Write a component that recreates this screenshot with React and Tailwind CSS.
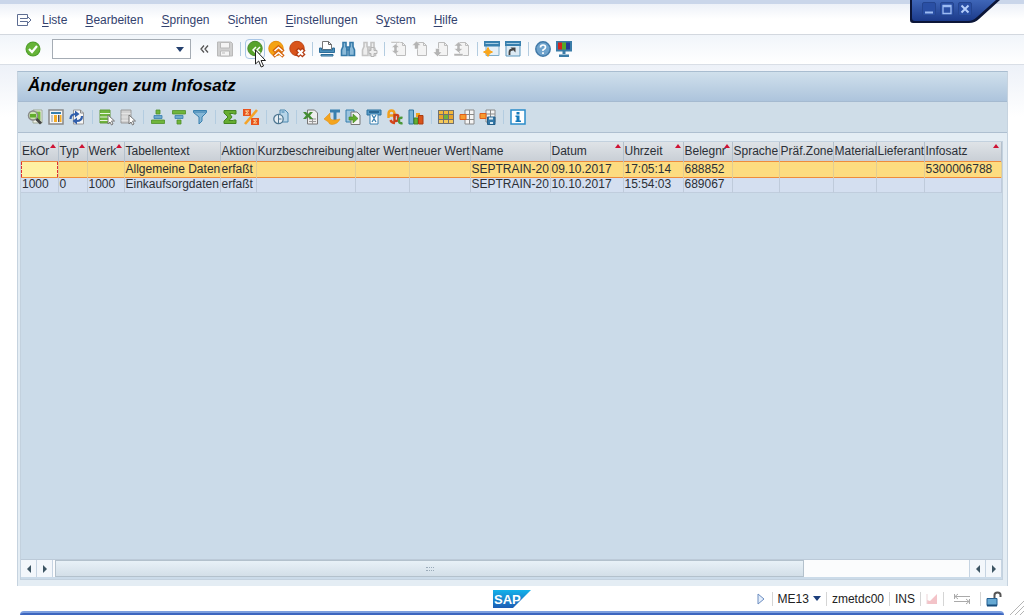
import { useState } from "react";

const menus = [
  ["", "L", "iste"],
  ["", "B", "earbeiten"],
  ["", "S", "pringen"],
  ["S", "i", "chten"],
  ["", "E", "instellungen"],
  ["S", "y", "stem"],
  ["", "H", "ilfe"],
];

const columns = [
  { key: "ekor", label: "EkOr", width: "w-[37px]", sorted: true },
  { key: "typ", label: "Typ", width: "w-[29px]", sorted: true },
  { key: "werk", label: "Werk", width: "w-[37px]", sorted: true },
  { key: "text", label: "Tabellentext", width: "w-24" },
  { key: "aktion", label: "Aktion", width: "w-9" },
  { key: "kurz", label: "Kurzbeschreibung", width: "w-[99px]" },
  { key: "alt", label: "alter Wert", width: "w-[54px]" },
  { key: "neu", label: "neuer Wert", width: "w-[61px]" },
  { key: "name", label: "Name", width: "w-20" },
  { key: "datum", label: "Datum", width: "w-[73px]", sorted: true },
  { key: "zeit", label: "Uhrzeit", width: "w-[60px]", sorted: true },
  { key: "beleg", label: "Belegnr", width: "w-[49px]", sorted: true },
  { key: "sprache", label: "Sprache", width: "w-[47px]" },
  { key: "zone", label: "Präf.Zone", width: "w-[54px]" },
  { key: "material", label: "Material", width: "w-[43px]" },
  { key: "lieferant", label: "Lieferant", width: "w-12" },
  { key: "infosatz", label: "Infosatz", width: "w-auto", sorted: true },
];

const rows = [
  { text: "Allgemeine Daten", aktion: "erfaßt", name: "SEPTRAIN-20", datum: "09.10.2017", zeit: "17:05:14", beleg: "688852", infosatz: "5300006788" },
  { ekor: "1000", typ: "0", werk: "1000", text: "Einkaufsorgdaten", aktion: "erfaßt", name: "SEPTRAIN-20", datum: "10.10.2017", zeit: "15:54:03", beleg: "689067" },
];

// Shared shapes
const page = "M5.5 1.5h6l3 3v10h-9z";
const pointer = "M9 6v9l2-2 1.500 3 1.500-1-1.500-3h3z";

function Binoculars({ color, light }) {
  return (
    <g fill={light} stroke={color} strokeWidth="1.6">
      <path d="M3 1.500h3v4l1 2v7H1.500V9L3 5.500z" />
      <path d="M10 1.500h3v4L14.500 9v5.500H9v-7l1-2z" />
      <path d="M7 6h2v3H7z" />
    </g>
  );
}

function PageArrow({ d }) {
  return (
    <>
      <path d={page} fill="#f3f3f3" stroke="#bdbdbd" />
      <path d="M11.500 1.500v3h3" fill="none" stroke="#bdbdbd" />
      <path d={d} fill="#b4b4b4" stroke="#fff" strokeWidth=".5" />
    </>
  );
}

const icons = {
  check: (
    <>
      <circle cx="8" cy="8" r="7.500" fill="#4f9e2c" />
      <circle cx="8" cy="8" r="6.500" fill="#66b338" />
      <path d="M4 8l3 3 5-6" fill="none" stroke="#fff" strokeWidth="2.200" />
    </>
  ),
  save: (
    <g stroke="#b9b9b9">
      <path d="M.5 1h13.500l1.500 1.500V15H.5z" fill="#cfcfcf" />
      <path d="M3.500 1.500h9v5.500h-9zM3.500 10h9v5h-9z" fill="#f4f4f4" />
      <path d="M5 12h3" />
    </g>
  ),
  back: (
    <>
      <circle cx="8" cy="7.500" r="7.200" fill="#58a32b" stroke="#46892a" />
      <path d="M9 6L6 9l3 3M13 6l-3 3 3 3" fill="none" stroke="#fff" strokeWidth="1.500" />
    </>
  ),
  exit: (
    <>
      <circle cx="8" cy="7.500" r="7.200" fill="#f5a313" stroke="#e58d0a" />
      <path d="M5.500 10.500l5-4.500 5 4.500M5.500 15.500l5-4.500 5 4.500" fill="none" stroke="#d4620c" strokeWidth="3.400" />
      <path d="M6.500 10l4-3.500 4 3.500M6.500 15l4-3.500 4 3.500" fill="none" stroke="#fff" strokeWidth="1.600" />
    </>
  ),
  cancel: (
    <>
      <circle cx="8" cy="7.500" r="7.200" fill="#d9541b" stroke="#bd4514" />
      <path d="M8 8l7 7M15 8l-7 7" stroke="#b43a10" strokeWidth="4.500" />
      <path d="M9 9l5 5M14 9l-5 5" stroke="#fff" strokeWidth="2.200" />
    </>
  ),
  print: (
    <>
      <path d="M3.500 .5h6l3 3v5h-9z" fill="#fff" stroke="#777" />
      <path d="M9.500 .5v3h3" fill="none" stroke="#666" />
      <path d="M.5 7h2v2h11V7h2v4.500H.5z" fill="#4b8fba" stroke="#2c6d99" />
      <path d="M2 13.500h12V15H2z" fill="#79afd0" stroke="#2c6d99" />
    </>
  ),
  find: <Binoculars color="#3479a8" light="#8dbbd9" />,
  findNext: (
    <>
      <Binoculars color="#c4c4c4" light="#ededed" />
      <path d="M10 6.500h3v3h3v3h-3v3h-3v-3H8v-3h2z" fill="#eee" stroke="#b5b5b5" />
    </>
  ),
  pageFirst: <PageArrow d="M0 .5h9V2H0zM4.500 3L8.500 6.500H6v3h2.500L4.500 13 .5 9.500H3v-3H.5z" />,
  pageUp: <PageArrow d="M4.500 0L9 4.500H6.500V8h-4V4.500H0z" />,
  pageDown: <PageArrow d="M2.500 7.500h4V11H9l-4.500 4.500L0 11h2.500z" />,
  pageLast: <PageArrow d="M4.500 1L9 5H6v2.500h3l-4.500 4L0 7.500h3V5H0zM0 12.500h9V15H0z" />,
  session: (
    <>
      <path d="M2 1h13v13.500H2z" fill="#e4eff7" stroke="#7fadca" />
      <path d="M0 0h16v5.500H0z" fill="#377fae" />
      <path d="M1.500 2.500h13" stroke="#a5cce3" />
      <path d="M4 6.500l1.500 3 3 1.500-3 1.500-1.500 3-1.500-3L-.5 11l3-1.500z" fill="#faa61a" stroke="#faa61a" />
    </>
  ),
  shortcut: (
    <>
      <path d="M1 1h14v14H1z" fill="#dceaf4" stroke="#5c97bd" />
      <path d="M0 0h16v5H0z" fill="#377fae" />
      <path d="M1.500 2.500h13" stroke="#a5cce3" />
      <path d="M4.500 14V11q0-2.500 3.500-2.500" fill="none" stroke="#444" strokeWidth="1.800" />
      <path d="M5.500 6.500h5v5z" fill="#444" />
    </>
  ),
  help: (
    <>
      <circle cx="8" cy="8" r="7.200" fill="#6fa3cc" stroke="#4179a8" strokeWidth="1.500" />
      <path d="M5.500 6.500Q5.500 4 8 4t2.500 2.300Q10.500 8 8 9v1M8 11.300v1.700" fill="none" stroke="#fff" strokeWidth="1.700" />
    </>
  ),
  layout: (
    <>
      <path d="M0 0h16v10.500H0z" fill="#3a7ca8" />
      <path d="M2 1.500h4v7H2z" fill="#d3241d" />
      <path d="M6 1.500h4v7H6z" fill="#58a829" />
      <path d="M10 1.500h4v7h-4z" fill="#243b96" />
      <path d="M6.500 10h3v3h-3zM3 13.500h10V16H3z" fill="#3a7ca8" />
    </>
  ),
  detail: (
    <>
      <path d="M6 1h9v13H6z" fill="#eef1ea" stroke="#a0ab97" />
      <path d="M9 2.500h4.500v9H9z" fill="#73b83a" />
      <circle cx="6" cy="6.500" r="4.500" fill="#c9e5ae" stroke="#8a8a8a" strokeWidth="1.500" />
      <path d="M3 5h6v3.500H3z" fill="#62ad2c" />
      <path d="M9.500 10l4.500 4.500" stroke="#444" strokeWidth="2.800" />
    </>
  ),
  table: (
    <>
      <path d="M1 1h14v14H1z" fill="#f6f6f6" stroke="#888" strokeWidth="1.500" />
      <path d="M3 3h10v2H3z" fill="#377fae" />
      <path d="M3 6h2v7H3z" fill="#c5c5c5" />
      <path d="M6 6h3v7H6z" fill="#f7ad25" />
      <path d="M10 6h1.500v7H10z" fill="#555" />
      <path d="M12 6h1.500v7H12z" fill="#f7ad25" />
    </>
  ),
  refresh: (
    <>
      <path d="M4.500 1h7l3 3v11h-10z" fill="#f7f7f7" stroke="#999" />
      <path d="M11.500 1v3h3" fill="none" stroke="#888" />
      <path d="M1.500 10q0-5 5.500-5M13 7q0 5-5.500 5" fill="none" stroke="#315fac" strokeWidth="2.200" />
      <path d="M6 1.500L10.500 5 6 8.500zM8 8.500v7L3.500 12z" fill="#315fac" />
    </>
  ),
  selectAll: (
    <>
      <path d="M1 1h10v13H1z" fill="#70b53b" stroke="#639a3b" />
      <path d="M1 4.500h10M1 8h10M1 11.500h10" stroke="#e8f4df" strokeWidth="1.200" />
      <path d={pointer} fill="#fff" stroke="#777" />
    </>
  ),
  deselect: (
    <>
      <path d="M1 1h10v13H1z" fill="#d2d2d2" stroke="#999" />
      <path d="M1.500 4.500h9M1.500 8h9M1.500 11.500h9" stroke="#e4e4e4" />
      <path d={pointer} fill="#fff" stroke="#777" />
    </>
  ),
  sortAsc: (
    <g strokeWidth=".8">
      <path d="M6 1h4v4H6z" fill="#70b53b" stroke="#4e8f28" />
      <path d="M4 6.500h8v3H4z" fill="#6fa9cd" stroke="#377fae" />
      <path d="M1.500 11h13v3.500h-13z" fill="#70b53b" stroke="#4e8f28" />
    </g>
  ),
  sortDesc: (
    <g strokeWidth=".8">
      <path d="M1.500 1.500h13V5h-13z" fill="#70b53b" stroke="#4e8f28" />
      <path d="M4 6.500h8v3H4z" fill="#6fa9cd" stroke="#377fae" />
      <path d="M6 11h4v4H6z" fill="#70b53b" stroke="#4e8f28" />
    </g>
  ),
  filter: (
    <>
      <path d="M1.500 1.500h13v2L10 8v4l-3 3V8L1.500 3.500z" fill="#86b7d6" stroke="#377fae" />
      <path d="M2 3h12" stroke="#377fae" />
    </>
  ),
  sum: <path d="M2 1.500h12V5h-2.500l-.5-.5H7.500L10 8l-3 3.500h4l.5-.5H14v3.500H2V12l4-4-4-4z" fill="#66ad31" stroke="#438522" />,
  subtotal: (
    <>
      <path d="M0 0h8v7H0zM8 9h8v7H8z" fill="#e8531d" />
      <path d="M6 2H2.500l2 1.500-2 1.500H6M14 11h-3.500l2 1.500-2 1.500H14" fill="none" stroke="#fde3a8" />
      <path d="M14 1L2 15" stroke="#f5a428" strokeWidth="2.600" />
    </>
  ),
  preview: (
    <>
      <path d="M7 1h5l3 3v9H7z" fill="#b8d5e8" stroke="#4d88af" />
      <circle cx="5.500" cy="10" r="4.700" fill="#e5edf3" stroke="#4d7691" strokeWidth="1.300" />
      <path d="M5.500 6v8M5.500 10h3" stroke="#4d7691" />
      <path d="M8.500 3h3" stroke="#377fae" />
    </>
  ),
  excel: (
    <>
      <path d="M4.500 1h7l3 3v11h-10z" fill="#eee" stroke="#777" />
      <path d="M6 10h7M6 12.500h7M9.500 9v6" stroke="#999" />
      <path d="M0 3h3l2 2 2-2h3L7 6.500 10 10H7L5 8l-2 2H0l3-3.500z" fill="#448c32" />
    </>
  ),
  word: (
    <>
      <path d="M6 .5h10v3h-3.500V11h-3V3.500H6z" fill="#377fae" />
      <path d="M0 10l6-6v4q0 3 3 3 4 0 7-1-2 5-8 5.500-3 0-3.500-2.500z" fill="#f4a51f" stroke="#e0901a" strokeWidth=".6" />
    </>
  ),
  exportFile: (
    <>
      <path d="M1 1h8v12H1z" fill="#9dc5df" stroke="#377fae" />
      <path d="M6 3h6l3 3v9.500H6z" fill="#f4f4f4" stroke="#777" />
      <path d="M4 8h4V5l5 4.500L8 14v-3H4z" fill="#60aa2c" stroke="#438522" strokeWidth=".6" />
    </>
  ),
  mail: (
    <>
      <path d="M1 1h14v5H1z" fill="#5a9bc5" stroke="#2b719f" />
      <path d="M3 3h10" stroke="#1b5680" strokeWidth="1.500" />
      <path d="M4 5h8v10H4z" fill="#fff" stroke="#377fae" />
      <path d="M6 6l2 3 2-3M6 13l2-3 2 3" fill="none" stroke="#377fae" strokeWidth="1.300" />
    </>
  ),
  abc: (
    <g fill="none" strokeWidth="2.400">
      <path d="M1.500 9V5q0-3.500 3-3.500T7.500 5v4M1.500 6.500h6" stroke="#f1a01c" />
      <path d="M3.500 11q1 3 4.500 3" stroke="#d5451a" />
      <path d="M7.500 6h2q2.500 0 1.500 2.500 1 3.500-2 3.500H7.500z" stroke="#c8401a" />
      <path d="M15.500 9q-3.500-1-3.500 2.500t3.500 2.500" stroke="#4b9739" />
    </g>
  ),
  chart: (
    <>
      <path d="M1 1h4.500v14H1z" fill="#79b3d5" stroke="#2f759f" />
      <path d="M6 9h4v6H6z" fill="#65ad32" stroke="#438522" />
      <path d="M8 4h4v4H8z" fill="#f4a51f" />
      <path d="M10.500 6.500H15V15h-4.500z" fill="#d9541b" stroke="#ab3d10" />
    </>
  ),
  grid: (
    <>
      <path d="M0 1h16v14H0z" fill="#707070" />
      <path d="M1 2h4v3H1zM6 2h4v3H6zM11 2h4v3h-4z" fill="#f3b83c" />
      <path d="M1 6h4v4H1zM11 6h4v4h-4z" fill="#e9a32b" />
      <path d="M6 6h4v4H6z" fill="#6fb33a" />
      <path d="M1 11h4v3H1zM6 11h4v3H6zM11 11h4v3h-4z" fill="#f5c95c" />
    </>
  ),
  variant: (
    <>
      <path d="M6 1h9v14H6z" fill="#f5f5f5" stroke="#8a8a8a" />
      <path d="M10.500 1v14M6 5.500h9M6 10.500h9" stroke="#8a8a8a" />
      <path d="M1 5.500h6v5H1z" fill="#f79b2e" stroke="#e15e1a" />
    </>
  ),
  variantSave: (
    <>
      <path d="M6 1h9v12H6z" fill="#f5f5f5" stroke="#8a8a8a" />
      <path d="M10.500 1v12M6 5h9" stroke="#8a8a8a" />
      <path d="M0 4.500h6v5H0z" fill="#f79b2e" stroke="#e15e1a" />
      <path d="M7.500 8H15v7.500H7.500z" fill="#3479a8" stroke="#235f8a" />
      <path d="M9 8.500h4v2H9zM10 13h3v2h-3z" fill="#d7e8f3" />
    </>
  ),
  info: (
    <>
      <path d="M1 1h14v14H1z" fill="#fff" stroke="#2b8cc9" strokeWidth="1.500" />
      <path d="M6.500 3h3v2.500h-3zM5.500 6.500h4v5H11V13H5.500v-1.500h1v-3.500h-1z" fill="#167abb" />
    </>
  ),
};

const mainTools = [
  ["save", "Sichern"], null,
  ["back", "Zurück"], ["exit", "Beenden"], ["cancel", "Abbrechen"], null,
  ["print", "Drucken"], ["find", "Suchen"], ["findNext", "Weiter suchen"], null,
  ["pageFirst", "Erste Seite"], ["pageUp", "Vorige Seite"], ["pageDown", "Nächste Seite"], ["pageLast", "Letzte Seite"], null,
  ["session", "Neuer Modus"], ["shortcut", "Verknüpfung erzeugen"], null,
  ["help", "Hilfe"], ["layout", "Lokales Layout"],
];

const listTools = [
  ["detail", "Details"], ["table", "Tabelle"], ["refresh", "Auffrischen"], null,
  ["selectAll", "Alle markieren"], ["deselect", "Alle entmarkieren"], null,
  ["sortAsc", "Aufsteigend sortieren"], ["sortDesc", "Absteigend sortieren"], ["filter", "Filter"], null,
  ["sum", "Summe"], ["subtotal", "Zwischensumme"], null,
  ["preview", "Druckvorschau"], null,
  ["excel", "Excel"], ["word", "Textverarbeitung"], ["exportFile", "Lokale Datei"], ["mail", "Mail"], ["abc", "ABC-Analyse"], ["chart", "Grafik"], null,
  ["grid", "Layout ändern"], ["variant", "Layout auswählen"], ["variantSave", "Layout sichern"], null,
  ["info", "Information"],
];

function Icon({ name }) {
  return (
    <svg viewBox="0 0 16 16" className="size-4 overflow-visible">
      {icons[name]}
    </svg>
  );
}

function Toolbar({ tools }) {
  return tools.map((tool, i) =>
    tool ? (
      <button
        key={tool[0]}
        aria-label={tool[1]}
        className={`relative size-4 shrink-0 ${tool[0] === "back" ? "outline outline-[#a9c6e6] rounded-xs outline-offset-1" : ""}`}
      >
        <Icon name={tool[0]} />
        {tool[0] === "back" && <Cursor />}
      </button>
    ) : (
      <span key={i} className="flex w-1 shrink-0 justify-center">
        <span className="h-3.5 w-px bg-[#b3cce0]" />
      </span>
    )
  );
}

function Cursor() {
  return (
    <svg viewBox="0 0 12 19" className="absolute top-2 left-2 z-10 h-[19px] w-3">
      <path d="M.5 1v14l3.200-3 2.500 6 2.300-1-2.500-5.500h4.500z" fill="#fff" stroke="#222" />
    </svg>
  );
}

function WindowControls() {
  return (
    <div className="absolute top-0 right-5 h-6 w-[94px]">
      <svg viewBox="0 0 94 24" className="absolute inset-0 h-6 w-[94px]">
        <defs>
          <linearGradient id="tab" x1="0" y1="0" x2="0" y2="1">
            <stop offset="0" stopColor="#3f66b8" />
            <stop offset="1" stopColor="#1b3a8a" />
          </linearGradient>
        </defs>
        <path d="M0 0v20q0 3 3 3h56q6 0 10-4L90 0z" fill="#0c1638" />
        <path d="M2 0v18q0 3 3 3h53q5 0 9-4L86 0z" fill="url(#tab)" />
      </svg>
      <div className="relative flex gap-1 pt-0.5 pl-3">
        <button aria-label="Minimieren" className="size-3.5 rounded-xs border border-[#244590] bg-[#2a4fa4]">
          <svg viewBox="0 0 12 12"><path d="M2 9.500h8" stroke="#9dbcf3" strokeWidth="2" /></svg>
        </button>
        <button aria-label="Maximieren" className="size-3.5 rounded-xs border border-[#244590] bg-[#2a4fa4]">
          <svg viewBox="0 0 12 12"><path d="M2 2.500h8v8H2zM2 3.500h8" fill="none" stroke="#9dbcf3" strokeWidth="1.300" /></svg>
        </button>
        <button aria-label="Schließen" className="size-3.5 rounded-xs border border-[#244590] bg-[#2a4fa4]">
          <svg viewBox="0 0 12 12"><path d="M2.500 2.500l7 7M9.500 2.500l-7 7" stroke="#b4cdfa" strokeWidth="2" /></svg>
        </button>
      </div>
    </div>
  );
}

function ScrollButton({ label, left }) {
  return (
    <button aria-label={label} className="flex w-4 shrink-0 items-center justify-center border-r border-[#c6d4e2] bg-[#f3f7fb]">
      <svg viewBox="0 0 4 8" className="h-2 w-1">
        <path d={left ? "M4 0v8L0 4z" : "M0 0v8l4-4z"} fill="#3d5563" />
      </svg>
    </button>
  );
}

function Divider() {
  return <span className="h-3.5 w-px shrink-0 bg-[#d5d5d5]" />;
}

function ResultTable() {
  return (
    <table className="w-full table-fixed border-collapse text-left text-[12px] leading-[14px] text-[#2b2f36]">
      <thead>
        <tr className="h-[19px] bg-linear-to-b from-[#dfe3e7] to-[#c9cfd6]">
          {columns.map((col) => (
            <th key={col.key} className={`${col.width} relative border-r border-[#b4c0cc] pl-px font-normal whitespace-nowrap`}>
              {col.label}
              {col.sorted && (
                <svg viewBox="0 0 6 4" className="absolute top-0.5 right-0.5 h-1 w-1.5">
                  <path d="M3 0l3 4H0z" fill="#cf1233" />
                </svg>
              )}
            </th>
          ))}
        </tr>
      </thead>
      <tbody>
        {rows.map((row, i) => (
          <tr key={row.beleg} className={i === 0 ? "h-4 border-y border-[#ee8b3c] bg-[#fddc80]" : "h-[15px] border-b border-[#c0cddd] bg-[#d4dff0]"}>
            {columns.map((col) => (
              <td
                key={col.key}
                className={`relative border-r pl-px leading-[13px] whitespace-nowrap ${i === 0 ? "border-r-[#e3cd91]" : "border-r-[#bfcbdb]"}`}
              >
                {row[col.key]}
                {i === 0 && col.key === "ekor" && (
                  <span className="absolute inset-0 border-x border-dashed border-[#dd2f35] bg-[#fff1a3]" />
                )}
              </td>
            ))}
          </tr>
        ))}
      </tbody>
    </table>
  );
}

export default function App() {
  const [command, setCommand] = useState("");

  return (
    <div className="relative flex min-h-screen flex-col overflow-hidden bg-white font-['Liberation_Sans',Arial,sans-serif] text-[12px]">
      {/* Menu bar */}
      <nav className="flex h-[35px] items-center border-t-4 border-b border-t-[#cad6ea] border-b-[#d3d8df] bg-linear-to-b from-[#edf1f8] to-white to-50% pt-0.5 pl-4 text-[#33426e]">
        <button aria-label="Systemmenü" className="mr-2.5">
          <svg viewBox="0 0 16 12" className="h-3 w-4" fill="none" stroke="#5d6d92">
            <path d="M11.500 3V.5H1.500v11h10V9M4 4.500h7.500V2.500L15 6l-3.500 3.500v-2H4" />
          </svg>
        </button>
        <div className="flex gap-[18px]">
          {menus.map(([before, key, after]) => (
            <button key={key}>
              {before}
              <span className="underline underline-offset-2">{key}</span>
              {after}
            </button>
          ))}
        </div>
      </nav>

      {/* Standard toolbar */}
      <div className="flex h-[30px] items-center gap-[5px] border-b border-[#d9dee6] bg-linear-to-b from-[#f1f5fa] to-white pb-px pl-[25px]">
        <button aria-label="Weiter" className="size-4"><Icon name="check" /></button>
        <div className="ml-1.5 flex h-5 w-[139px] border border-[#a5acb4] bg-white">
          <input
            aria-label="Kommandofeld"
            value={command}
            onChange={(e) => setCommand(e.target.value)}
            className="min-w-0 flex-1 px-1 outline-none"
          />
          <button aria-label="Kommandos anzeigen" className="flex w-5 items-center justify-center">
            <svg viewBox="0 0 8 5" className="h-[5px] w-2"><path d="M0 0h8L4 5z" fill="#24406e" /></svg>
          </button>
        </div>
        <button aria-label="Kommandofeld ausblenden" className="flex size-4 items-center justify-center">
          <svg viewBox="0 0 9 8" className="h-2 w-[9px]" fill="none" stroke="#555" strokeWidth="1.300">
            <path d="M4 .5L1 4l3 3.500M8 .5L5 4l3 3.500" />
          </svg>
        </button>
        <Toolbar tools={mainTools} />
      </div>

      {/* Content */}
      <div className="flex flex-1 flex-col bg-linear-to-b from-[#edf1f8] to-white to-10% pt-1.5 pr-4 pl-[17px]">
        <main className="flex flex-1 flex-col border-x border-t border-[#a9bdd0] border-x-[#c6d3df] bg-[#cfdde8]">
          <h1 className="flex h-[30px] items-center border-b border-[#a5bad0] bg-linear-to-b from-[#d0e0ec] to-[#adc4dc] pb-0.5 pl-2.5 text-[17px] font-bold text-black italic">
            Änderungen zum Infosatz
          </h1>
          <div className="flex h-[31px] items-center gap-[5px] border-b border-[#aebfd0] pb-px pl-[9px]">
            <Toolbar tools={listTools} />
          </div>
          <div className="flex flex-1 flex-col bg-[#e4edf4] pt-2 pr-1 pb-1.5 pl-0.5">
            <div className="flex flex-1 flex-col border border-[#c3d1de] bg-[#cbdbe9]">
              <div className="flex-1">
                <ResultTable />
              </div>
              {/* Horizontal scrollbar */}
              <div className="mb-0.5 flex h-[18px] border-t border-[#bccad8] bg-[#fbfcfd]">
                <ScrollButton label="Nach links" left />
                <ScrollButton label="Nach rechts" />
                <div className="flex-1 border-r border-[#c6d4e2] pl-0.5">
                  <div className="flex h-full w-[82%] items-center justify-center border border-[#b3c1cc] bg-linear-to-b from-[#e8f1f7] to-[#d3dfe8]">
                    <span className="h-1 w-2 border-y border-dotted border-[#9aabb9]" />
                  </div>
                </div>
                <ScrollButton label="Nach links" left />
                <ScrollButton label="Nach rechts" />
              </div>
            </div>
          </div>
        </main>
      </div>

      {/* Status bar */}
      <footer className="grid h-[25px] grid-cols-[1fr_auto_1fr] items-center text-[#222]">
        <span />
        <svg viewBox="0 0 38 18" className="h-[18px] w-[38px]" role="img" aria-label="SAP">
          <defs>
            <linearGradient id="sap" x1="0" y1="0" x2="0" y2="1">
              <stop offset="0" stopColor="#13b1ea" />
              <stop offset="1" stopColor="#1c5db5" />
            </linearGradient>
          </defs>
          <path d="M0 0h38L20 18H0z" fill="url(#sap)" />
          <text x="1" y="14" fill="#fff" fontSize="13" fontWeight="bold" fontFamily="Liberation Sans, Arial, sans-serif">SAP</text>
        </svg>
        <div className="flex items-center justify-end gap-[5px] pr-[22px]">
          <button aria-label="Statusfeld einblenden" className="mr-0.5">
            <svg viewBox="0 0 8 12" className="h-3 w-2"><path d="M1 1l6 5-6 5z" fill="#e4eefb" stroke="#6c8dc0" /></svg>
          </button>
          <Divider />
          <button className="flex items-center gap-1">
            ME13
            <svg viewBox="0 0 8 5" className="h-[5px] w-2"><path d="M0 0h8L4 5z" fill="#1c3e7b" /></svg>
          </button>
          <Divider />
          <span>zmetdc00</span>
          <Divider />
          <span>INS</span>
          <Divider />
          <svg viewBox="0 0 12 12" className="h-3 w-3"><path d="M1 11V7l3 1 7-7v10z" fill="#f3c3c8" /><path d="M1 1v10" stroke="#ecd5d8" /></svg>
          <Divider />
          <svg viewBox="0 0 18 12" className="mx-1 h-3 w-[18px]" fill="none" stroke="#aaa">
            <path d="M1.500 1v5M2 3.500h15M5 1L2 3.500 5 6M16.500 6v5M1 8.500h15M13 6l3 2.500-3 2.500" />
          </svg>
          <Divider />
          <svg viewBox="0 0 16 16" className="size-4">
            <path d="M8.500 8V4q0-2.500 3-2.500T14.500 4v2" fill="none" stroke="#555" strokeWidth="2" />
            <path d="M1 7.500h10v7H1z" fill="#66a9d3" stroke="#235f93" />
            <path d="M1 14.500h10" stroke="#174d7c" strokeWidth="2" />
          </svg>
        </div>
      </footer>
      <div className="mr-5 ml-5 h-1 rounded-t-lg border-t-2 border-[#7d9fdf] bg-[#3d66bf]" />

      <WindowControls />
      <svg viewBox="0 0 14 16" className="absolute right-0 bottom-0 h-4 w-3.5" stroke="#b5b5b5">
        <path d="M0 16L14 2M5 16l9-9M10 16l4-4" />
      </svg>
    </div>
  );
}
